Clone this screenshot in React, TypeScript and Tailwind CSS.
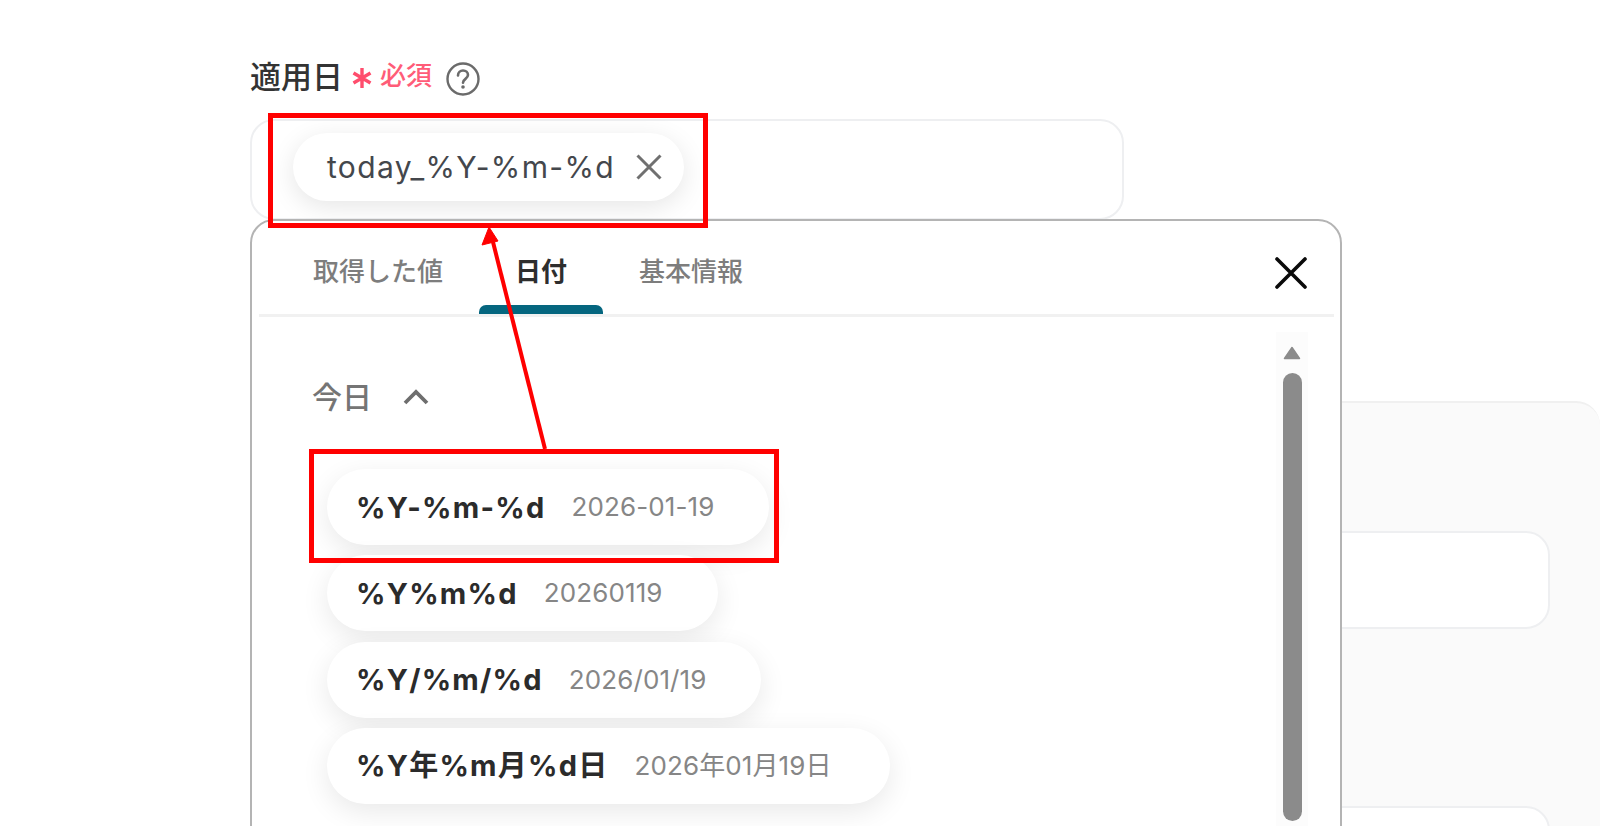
import React from "react";

const font = { fontFamily: '"Inter", "Noto Sans CJK JP", sans-serif' };

const rows = [
  { k: "%Y-%m-%d", v: "2026-01-19", w: "w-[442px]" },
  { k: "%Y%m%d", v: "20260119", w: "w-[391px]" },
  { k: "%Y/%m/%d", v: "2026/01/19", w: "w-[434px]" },
  { k: "%Y年%m月%d日", v: "2026年01月19日", w: "w-[563px]" },
];

function Tab({ label, active }: { label: string; active?: boolean }) {
  return (
    <div className="flex flex-col items-stretch">
      <div
        className={
          "h-[84px] flex items-center justify-center px-[36px] pt-[18px] text-[26px] leading-none " +
          (active ? "font-semibold text-[#2e2e2e]" : "font-medium text-[#7d7d7d]")
        }
      >
        {label}
      </div>
      <div className={"h-[9px] rounded-t-[7px] " + (active ? "bg-[#05667f]" : "")} />
    </div>
  );
}

export default function App() {
  return (
    <div className="relative h-[826px] w-[1600px] overflow-hidden bg-white" style={font}>
      <div className="flex flex-col pl-[250px] pt-[56px]">
        {/* label */}
        <div className="flex h-[40px] items-center">
          <span className="text-[31px] leading-none font-medium text-[#333333]">適用日</span>
          <svg className="ml-[8px] mt-[3px]" width="22" height="22" viewBox="0 0 22 22" fill="none">
            <path d="M11 1v20M2.5 6l17 10M19.5 6l-17 10" stroke="#ff4d6d" strokeWidth="3.4" />
          </svg>
          <span className="ml-[7px] text-[26px] leading-none font-medium text-[#ff5c78]">必須</span>
          <svg className="ml-[14px] mt-[6px]" width="34" height="34" viewBox="0 0 34 34" fill="none">
            <circle cx="17" cy="17" r="15.5" stroke="#6b6b6b" strokeWidth="2.4" />
            <path
              d="M12 13.5c0-3 2.2-5 5-5s5 2 5 4.6c0 3.8-5 3.8-5 7.6"
              stroke="#6b6b6b"
              strokeWidth="2.6"
              strokeLinecap="round"
            />
            <circle cx="17" cy="25" r="1.8" fill="#6b6b6b" />
          </svg>
        </div>

        {/* input */}
        <div className="mt-[23px] flex h-[101px] w-[874px] items-start rounded-[24px] border-2 border-[#eeeff1] pl-[41px] pt-[12px]">
          <div className="flex h-[68px] w-[391px] items-center rounded-full bg-white pl-[34px] shadow-[0_6px_26px_rgba(0,0,0,0.10)]">
            <span className="w-[287px] text-[30px] leading-none tracking-[1.35px] whitespace-nowrap text-[#44474c]">today_%Y-%m-%d</span>
            <svg className="ml-[22px]" width="26" height="26" viewBox="0 0 26 26" fill="none">
              <path d="M1.5 1.5l23 23M24.5 1.5l-23 23" stroke="#707070" strokeWidth="3" />
            </svg>
          </div>
        </div>

        {/* panel behind the popup */}
        <div className="mt-[181px] flex h-[500px] flex-col rounded-tr-[24px] border-t-2 border-[#f0f0f0] bg-[#fafafa] pr-[50px]">
          <div className="mt-[128px] h-[104px] rounded-[24px] border-2 border-[#eeeff1] bg-white" />
          <div className="mt-[177px] h-[101px] rounded-[24px] border-2 border-[#eeeff1] bg-white" />
        </div>
      </div>

      {/* popup */}
      <div className="absolute left-[250px] top-[219px] h-[700px] w-[1092px] rounded-[24px] border-2 border-[#b4b4b4] bg-white">
        <div className="relative flex h-[93px] items-start pl-[25px]">
          <Tab label="取得した値" />
          <Tab label="日付" active />
          <Tab label="基本情報" />
          <svg className="absolute left-[1023px] top-[36px]" width="32" height="32" viewBox="0 0 32 32" fill="none">
            <path d="M2 2l28 28M30 2L2 30" stroke="#0a0a0a" strokeWidth="3.6" strokeLinecap="round" />
          </svg>
        </div>
        <div className="ml-[7px] mr-[6px] h-[3px] bg-[#f1f1f1]" />
        <div className="flex justify-between pr-[32px]">
          <div className="flex flex-col pl-[60px]">
            <div className="mt-[60px] flex h-[40px] items-center">
              <span className="text-[30px] leading-none font-medium text-[#757575]">今日</span>
              <svg className="ml-[31px]" width="26" height="16" viewBox="0 0 26 16" fill="none">
                <path d="M2 14L13 3l11 11" stroke="#6e6e6e" strokeWidth="3.8" />
              </svg>
            </div>
            <div className="ml-[15px] mt-[52px] flex flex-col gap-[10.25px]">
              {rows.map((r) => (
                <div
                  key={r.k}
                  className={
                    "flex h-[76px] items-center rounded-full bg-white pl-[29px] shadow-[0_8px_28px_rgba(0,0,0,0.09)] " + r.w
                  }
                >
                  <span className="text-[29px] leading-none font-bold tracking-[1.25px] text-[#2b2b2b]">{r.k}</span>
                  <span className="ml-[26px] text-[26px] leading-none tracking-[0.1px] text-[#868686]">{r.v}</span>
                </div>
              ))}
            </div>
          </div>
          <div className="mt-[15px] flex h-[500px] w-[32px] flex-col items-center bg-[#fcfcfc]">
            <svg className="mt-[14px]" width="18" height="14" viewBox="0 0 18 14" fill="none">
              <path d="M9 1.5L16.5 12.5H1.5Z" fill="#8b8b8b" stroke="#8b8b8b" strokeWidth="1.5" strokeLinejoin="round" />
            </svg>
            <div className="mt-[13px] h-[448px] w-[19px] rounded-full bg-[#8b8b8b]" />
          </div>
        </div>
      </div>

      {/* annotations */}
      <div className="absolute left-[268px] top-[113px] h-[115px] w-[440px] border-[5px] border-[#ff0000]" />
      <div className="absolute left-[309px] top-[449px] h-[114px] w-[470px] border-[5px] border-[#ff0000]" />
      <svg className="absolute left-[470px] top-[220px]" width="90" height="235" viewBox="0 0 90 235" fill="none">
        <path d="M75 229L23 22" stroke="#ff0000" strokeWidth="4" />
        <path d="M19 7L12 25L28 21Z" fill="#ff0000" stroke="#ff0000" strokeWidth="1" />
      </svg>
    </div>
  );
}
